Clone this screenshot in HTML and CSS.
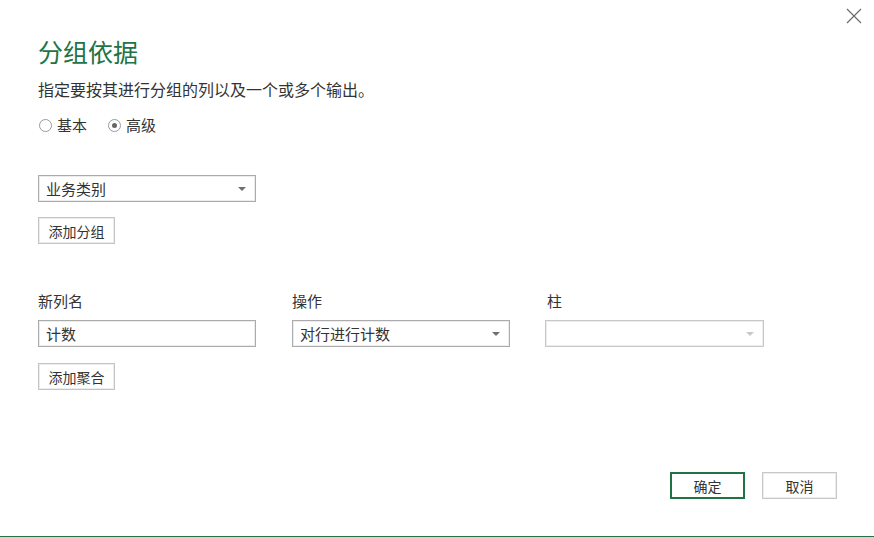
FILE: index.html
```html
<!DOCTYPE html>
<html lang="zh-CN">
<head>
<meta charset="utf-8">
<title>分组依据</title>
<link rel="stylesheet" href="styles.css">
</head>
<body>
<div class="dialog">
  <button class="close" aria-label="关闭">
    <svg width="16" height="16" viewBox="0 0 16 16"><path d="M1 1 L15 15 M15 1 L1 15" stroke="#6b6b6b" stroke-width="1.2" fill="none"/></svg>
  </button>
  <div class="content">
    <h1 class="title">分组依据</h1>
    <p class="subtitle">指定要按其进行分组的列以及一个或多个输出。</p>
    <div class="radios">
      <label class="radio"><span class="circle"></span>基本</label>
      <label class="radio"><span class="circle checked"></span>高级</label>
    </div>
    <div class="select group-select"><span class="select-text">业务类别</span><span class="arrow"></span></div>
    <button class="btn add-group">添加分组</button>
    <div class="agg-grid">
      <div class="label">新列名</div>
      <div class="label">操作</div>
      <div class="label">柱</div>
      <div class="select input"><span class="select-text">计数</span></div>
      <div class="select"><span class="select-text">对行进行计数</span><span class="arrow"></span></div>
      <div class="select disabled"><span class="select-text"></span><span class="arrow"></span></div>
    </div>
    <button class="btn add-agg">添加聚合</button>
  </div>
  <div class="footer">
    <button class="btn ok">确定</button>
    <button class="btn cancel">取消</button>
  </div>
</div>
</body>
</html>
```
FILE: styles.css
```css
* { box-sizing: border-box; }
html, body { margin: 0; padding: 0; background: #fff; }
body {
  font-family: "Noto Sans CJK SC", "Noto Sans", sans-serif;
  color: #333;
}
.dialog {
  position: relative;
  height: 537px;
  display: flex;
  flex-direction: column;
  border-bottom: 1px solid #217346;
}
.close {
  position: absolute;
  top: 8px;
  right: 12px;
  width: 16px;
  height: 16px;
  padding: 0;
  border: none;
  background: none;
  cursor: pointer;
}
.close svg { display: block; }
.content {
  padding: 0 38px;
  display: flex;
  flex-direction: column;
  align-items: flex-start;
}
.title {
  margin: 35px 0 0;
  font-size: 25px;
  line-height: 32px;
  font-weight: normal;
  color: #217346;
}
.subtitle {
  margin: 11px 0 0;
  font-size: 16px;
  line-height: 22px;
  color: #333;
}
.radios {
  margin-top: 15px;
  display: flex;
  gap: 20px;
  height: 20px;
  align-items: center;
}
.radio {
  display: flex;
  align-items: center;
  font-size: 15px;
  line-height: 20px;
}
.circle {
  width: 13px;
  height: 13px;
  border: 1px solid #9a9a9a;
  border-radius: 50%;
  margin: 0 5px 0 1px;
  display: flex;
  align-items: center;
  justify-content: center;
}
.circle.checked::after {
  content: "";
  width: 5px;
  height: 5px;
  border-radius: 50%;
  background: #666;
}
.select {
  position: relative;
  width: 218px;
  height: 27px;
  border: 1px solid #ababab;
  box-shadow: inset 0 0 0 1px #ececec;
  display: flex;
  align-items: center;
  padding: 0 7px;
  font-size: 15px;
}
.select-text { line-height: 20px; }
.arrow {
  position: absolute;
  right: 9px;
  top: 11px;
  width: 0;
  height: 0;
  border-left: 4px solid transparent;
  border-right: 4px solid transparent;
  border-top: 4px solid #707070;
}
.group-select { margin-top: 40px; }
.select.disabled {
  border-color: #c8c8c8;
  width: 219px;
}
.select.disabled .arrow { border-top-color: #c8c8c8; }
.btn {
  font-family: "Noto Sans CJK SC", "Noto Sans", sans-serif;
  font-size: 14px;
  color: #333;
  background: #fff;
  border: 1px solid #c4c4c4;
  box-shadow: inset 0 0 0 1px #ececec;
  height: 27px;
  width: 77px;
  padding: 0;
  line-height: 20px;
}
.add-group { margin-top: 15px; }
.agg-grid {
  margin-top: 47px;
  display: grid;
  grid-template-columns: 218px 218px 219px;
  column-gap: 36px;
  row-gap: 9px;
}
.agg-grid .select:nth-child(6) { margin-left: -1px; }
.label {
  font-size: 15px;
  line-height: 20px;
}
.agg-grid .label:nth-child(3) { padding-left: 1px; }
.add-agg { margin-top: 16px; }
.footer {
  margin-top: auto;
  margin-bottom: 37px;
  display: flex;
  justify-content: flex-end;
  gap: 17px;
  padding-right: 37px;
}
.footer .btn { width: 75px; }
.btn.ok {
  border: 2px solid #217346;
  box-shadow: none;
}
.btn.cancel { border-color: #c8c8c8; }
```
